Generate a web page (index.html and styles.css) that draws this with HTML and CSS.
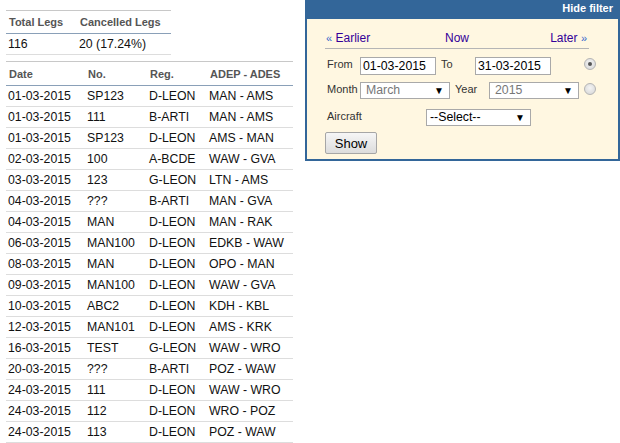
FILE: index.html
```html
<!DOCTYPE html>
<html>
<head>
<meta charset="utf-8">
<link rel="stylesheet" href="styles.css">
</head>
<body>
<div class="page">
  <div class="left">
    <table class="grid summary">
      <thead><tr><th class="c1">Total Legs</th><th>Cancelled Legs</th></tr></thead>
      <tbody><tr><td>116</td><td>20 (17.24%)</td></tr></tbody>
    </table>
    <table class="grid legs">
      <thead><tr><th class="d">Date</th><th class="n">No.</th><th class="r">Reg.</th><th class="a">ADEP - ADES</th></tr></thead>
      <tbody>
        <tr><td>01-03-2015</td><td>SP123</td><td>D-LEON</td><td>MAN - AMS</td></tr>
        <tr><td>01-03-2015</td><td>111</td><td>B-ARTI</td><td>MAN - AMS</td></tr>
        <tr><td>01-03-2015</td><td>SP123</td><td>D-LEON</td><td>AMS - MAN</td></tr>
        <tr><td>02-03-2015</td><td>100</td><td>A-BCDE</td><td>WAW - GVA</td></tr>
        <tr><td>03-03-2015</td><td>123</td><td>G-LEON</td><td>LTN - AMS</td></tr>
        <tr><td>04-03-2015</td><td>???</td><td>B-ARTI</td><td>MAN - GVA</td></tr>
        <tr><td>04-03-2015</td><td>MAN</td><td>D-LEON</td><td>MAN - RAK</td></tr>
        <tr><td>06-03-2015</td><td>MAN100</td><td>D-LEON</td><td>EDKB - WAW</td></tr>
        <tr><td>08-03-2015</td><td>MAN</td><td>D-LEON</td><td>OPO - MAN</td></tr>
        <tr><td>09-03-2015</td><td>MAN100</td><td>D-LEON</td><td>WAW - GVA</td></tr>
        <tr><td>10-03-2015</td><td>ABC2</td><td>D-LEON</td><td>KDH - KBL</td></tr>
        <tr><td>12-03-2015</td><td>MAN101</td><td>D-LEON</td><td>AMS - KRK</td></tr>
        <tr><td>16-03-2015</td><td>TEST</td><td>G-LEON</td><td>WAW - WRO</td></tr>
        <tr><td>20-03-2015</td><td>???</td><td>B-ARTI</td><td>POZ - WAW</td></tr>
        <tr><td>24-03-2015</td><td>111</td><td>D-LEON</td><td>WAW - WRO</td></tr>
        <tr><td>24-03-2015</td><td>112</td><td>D-LEON</td><td>WRO - POZ</td></tr>
        <tr><td>24-03-2015</td><td>113</td><td>D-LEON</td><td>POZ - WAW</td></tr>
      </tbody>
    </table>
  </div>
  <div class="filter">
    <div class="filter-head"><a class="hide">Hide filter</a></div>
    <div class="filter-body">
      <div class="nav">
        <a class="earlier"><span class="q">«</span> Earlier</a>
        <a class="now">Now</a>
        <a class="later">Later <span class="q">»</span></a>
      </div>
      <div class="frow r1">
        <span class="lbl w1">From</span>
        <span class="input i1">01-03-2015</span>
        <span class="lbl w2">To</span>
        <span class="input i2">31-03-2015</span>
        <span class="radio on"></span>
      </div>
      <div class="frow r2">
        <span class="lbl w1">Month</span>
        <span class="select s1 dim">March<span class="arr">▼</span></span>
        <span class="lbl w2">Year</span>
        <span class="select s2 dim">2015<span class="arr">▼</span></span>
        <span class="radio"></span>
      </div>
      <div class="frow r3">
        <span class="lbl w3">Aircraft</span>
        <span class="select s3">--Select--<span class="arr">▼</span></span>
      </div>
      <button class="show">Show</button>
    </div>
  </div>
</div>
</body>
</html>
```

FILE: styles.css
```css
html, body {
  margin: 0;
  padding: 0;
  background: #fff;
}
body {
  font-family: "Liberation Sans", Arial, sans-serif;
  font-size: 12px;
  color: #111;
}
.page {
  display: flex;
  align-items: flex-start;
  padding-left: 6px;
  width: 614px;
}
.left {
  width: 287px;
  padding-top: 10px;
}
.grid {
  border-collapse: collapse;
  border-top: 1px solid #c8c8c8;
  table-layout: fixed;
}
.grid th, .grid td {
  box-sizing: border-box;
}
.grid th {
  font-size: 11px;
  font-weight: bold;
  color: #555;
  text-align: left;
  height: 23px;
  padding: 0 3px;
  border-bottom: 1px solid #8aa0b8;
  white-space: nowrap;
}
.grid td {
  font-size: 12.3px;
  height: 21px;
  padding: 0 2px;
  border-bottom: 1px solid #dddddd;
  white-space: nowrap;
}
.summary {
  width: 165px;
}
.summary .c1 { width: 71px; }
.legs {
  width: 287px;
  margin-top: 6px;
}
.legs th { height: 24px; }
.legs .d { width: 79px; }
.legs .n { width: 62px; }
.legs .r { width: 60px; }
.legs .a { width: 86px; }
.filter {
  margin-left: 12px;
  width: 311px;
  border: 2px solid #336699;
  border-top: 0;
  background: #fff7e1;
}
.filter-head {
  background: #336699;
  height: 19px;
  text-align: right;
  padding-right: 5px;
}
.hide {
  color: #fff;
  font-weight: bold;
  font-size: 11px;
  line-height: 17px;
}
.filter-body {
  padding: 11px 0 5px 18px;
}
.nav {
  width: 264px;
  display: grid;
  grid-template-columns: 1fr auto 1fr;
  border-bottom: 1px solid #b5b5b5;
  font-size: 12px;
  line-height: 17px;
  padding-bottom: 1px;
  color: #330099;
}
.nav .earlier { padding-left: 1px; }
.nav .later { text-align: right; padding-right: 2px; }
.nav .q { color: #3366cc; font-size: 11px; }
.frow {
  display: flex;
  align-items: flex-start;
  width: 272px;
  height: 18px;
}
.r1 { margin-top: 8px; }
.r2 { margin-top: 7px; }
.r3 { margin-top: 9px; }
.lbl {
  font-size: 11px;
  color: #333;
  line-height: 12px;
  padding-top: 1px;
}
.w1 { width: 33px; padding-left: 2px; }
.w2 { width: 34px; padding-left: 5px; }
.w3 { width: 99px; padding-left: 2px; }
.input, .select {
  box-sizing: border-box;
  height: 18px;
  border: 1px solid #a9a9a9;
  background: #fff;
  font-size: 12.3px;
  line-height: 16px;
  padding-left: 2px;
  color: #000;
  position: relative;
}
.select { height: 17px; line-height: 15px; padding-left: 5px; }
.s3 { padding-left: 3px; }
.i1, .i2 { width: 76px; }
.s1, .s2 { width: 90px; }
.s3 { width: 105px; }
.dim { color: #777; }
.arr {
  position: absolute;
  right: 5px;
  top: 0;
  font-size: 10px;
  color: #000;
}
.radio {
  box-sizing: border-box;
  width: 12px;
  height: 12px;
  border-radius: 50%;
  border: 1px solid #b4b4b4;
  background: radial-gradient(circle at 50% 40%, #f4f4f4, #d4d4d4);
  margin-left: auto;
  margin-right: 1px;
  margin-top: 1px;
  position: relative;
}
.radio.on::after {
  content: "";
  position: absolute;
  left: 3px;
  top: 3px;
  width: 4px;
  height: 4px;
  border-radius: 50%;
  background: #555;
}
.show {
  display: block;
  margin-top: 5px;
  width: 52px;
  height: 22px;
  border: 1px solid #a6a6a6;
  border-radius: 2px;
  background: linear-gradient(#f6f6f6, #dcdcdc);
  font-family: "Liberation Sans", Arial, sans-serif;
  font-size: 13px;
  color: #000;
  padding: 0;
}
```
